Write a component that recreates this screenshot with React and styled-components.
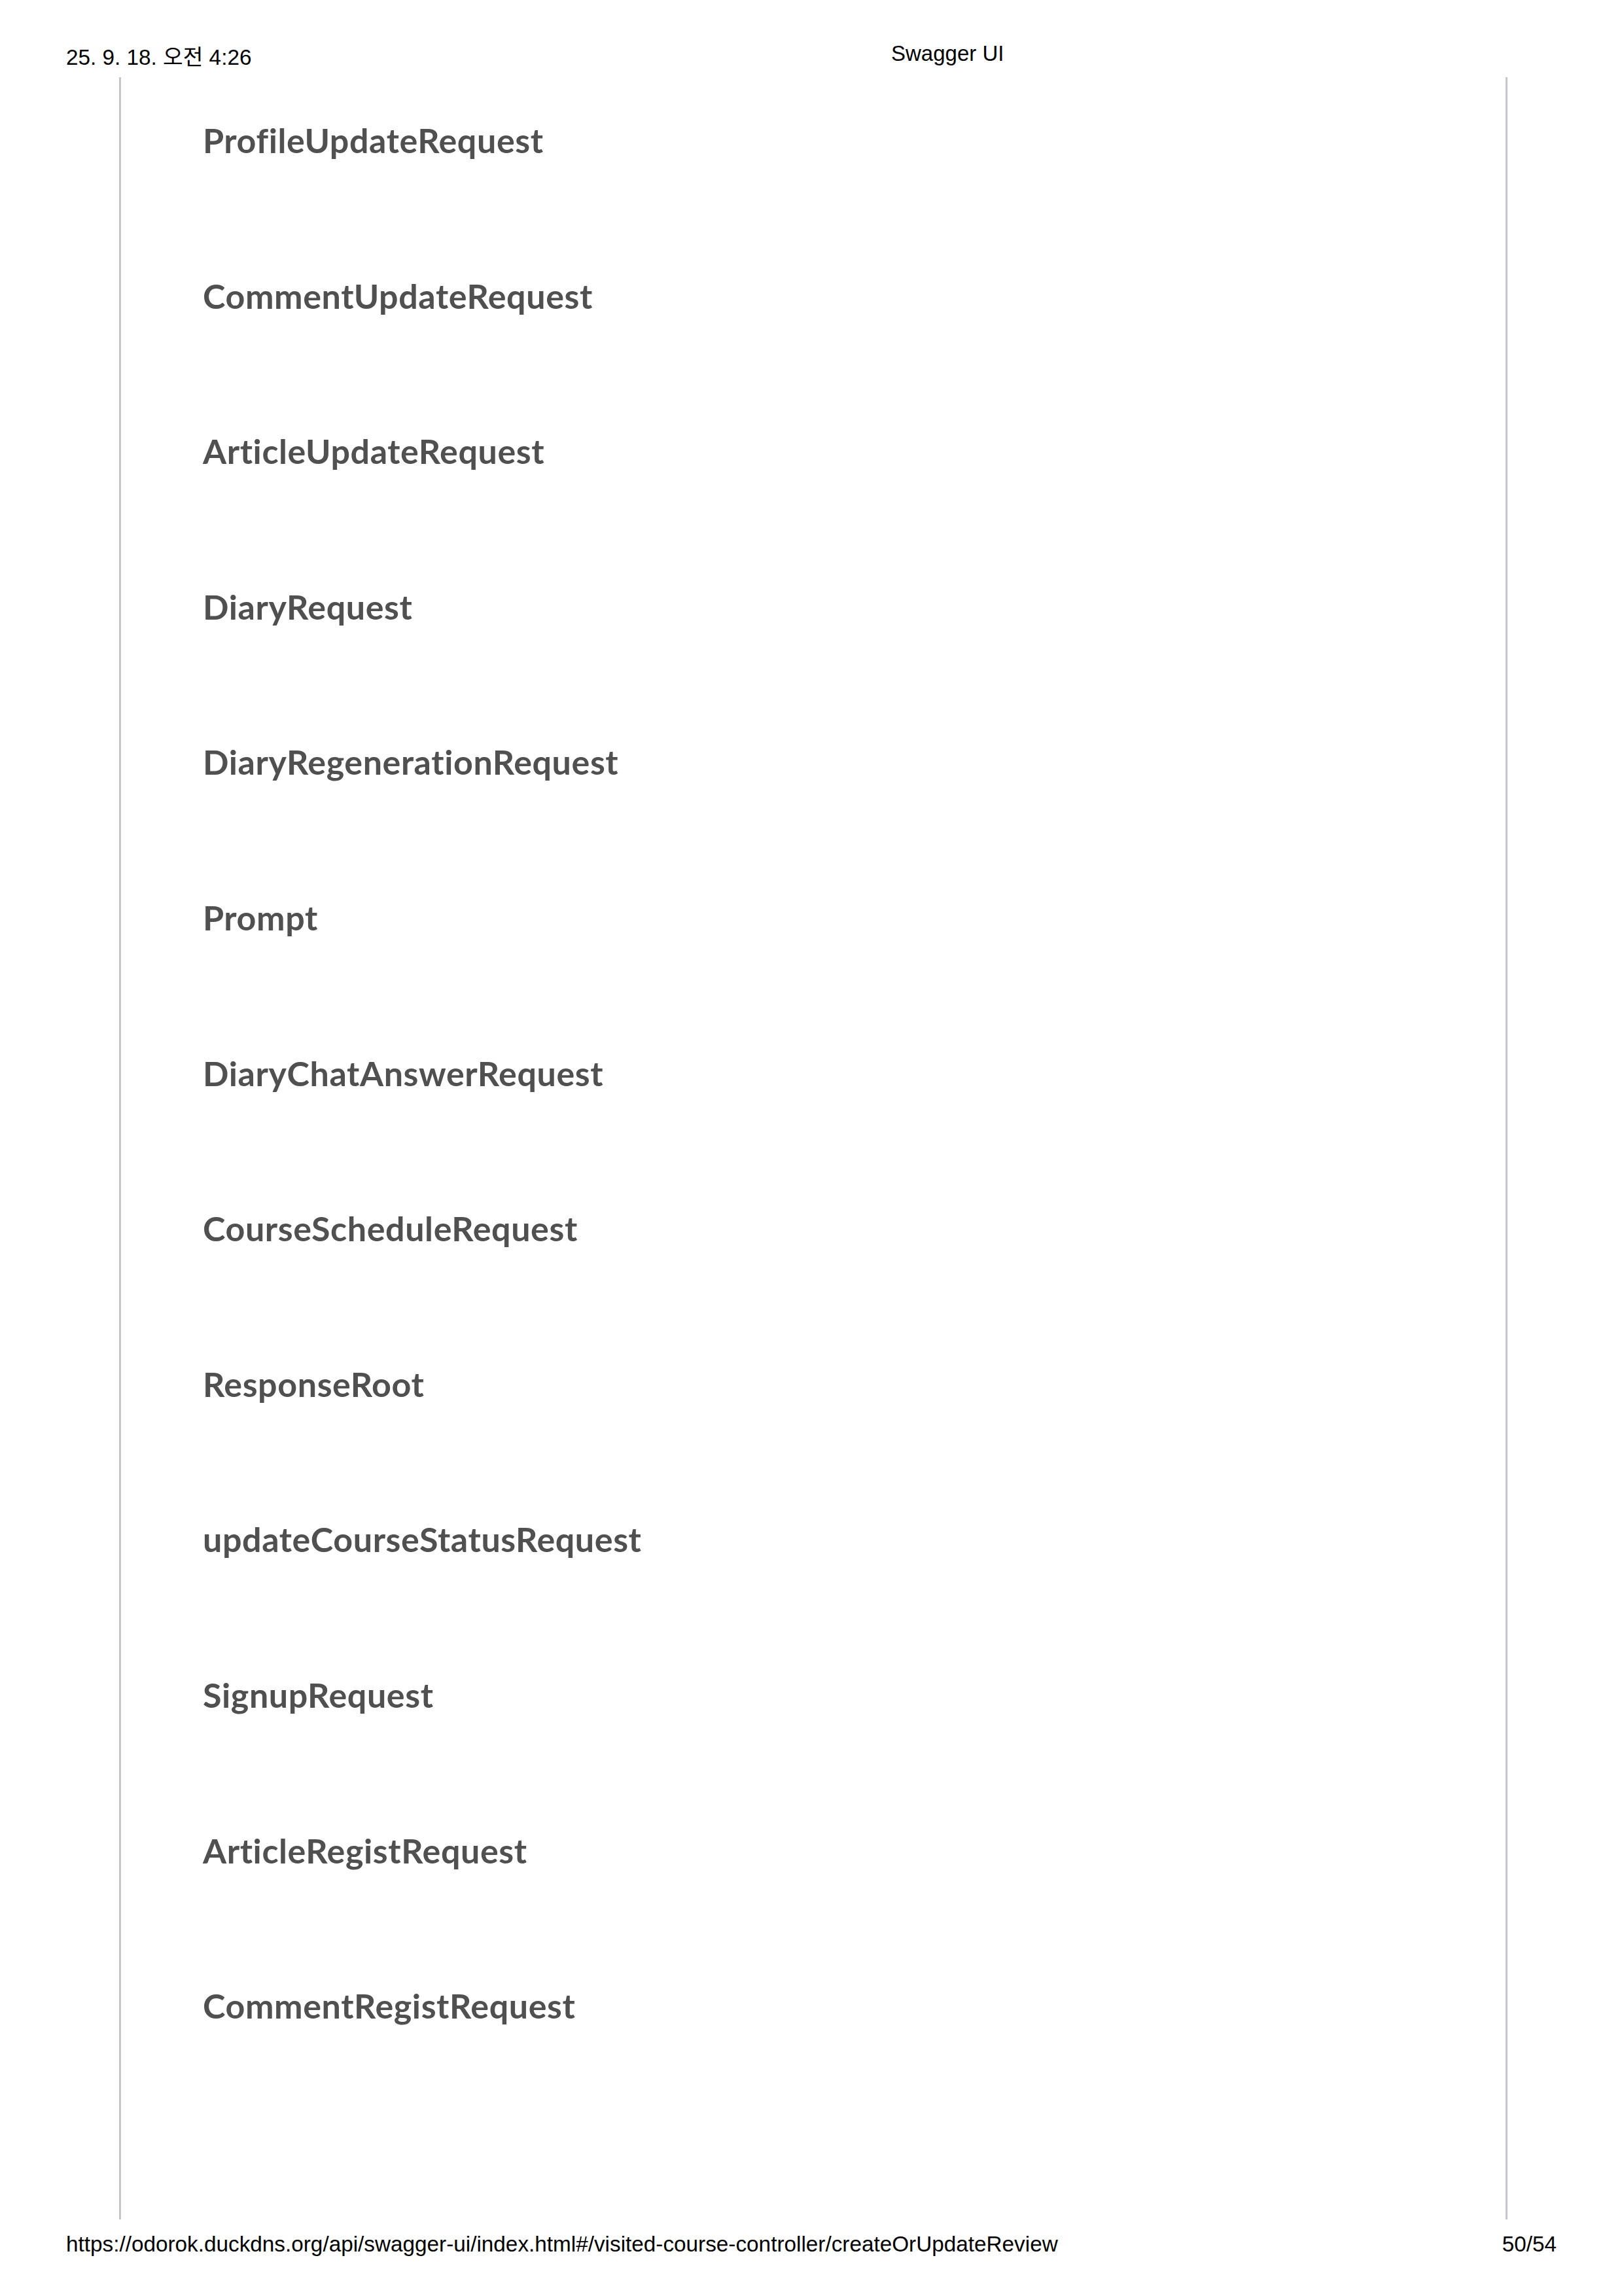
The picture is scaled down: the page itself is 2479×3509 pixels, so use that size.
import React from 'react';
import styled, { createGlobalStyle } from 'styled-components';

// Printed Swagger UI page: schema names only

const GlobalStyle = createGlobalStyle`
  html, body {
    margin: 0;
    padding: 0;
    background: #ffffff;
  }
  body {
    width: 2479px;
    height: 3509px;
    overflow: hidden;
  }
`;

const Page = styled.div`
  width: 2479px;
  height: 3509px;
  display: flex;
  flex-direction: column;
  font-family: "Liberation Sans", "Noto Sans CJK KR", sans-serif;
  color: #000000;
`;

const PrintHeader = styled.header`
  box-sizing: border-box;
  height: 118px;
  padding: 62px 0 0 101px;
  display: flex;
  align-items: flex-start;
`;

const HeaderDate = styled.div`
  flex: 0 0 1261px;
  padding-top: 6px;
  font-size: 33.3px;
  line-height: 40px;
`;

const HeaderTitle = styled.div`
  font-size: 33px;
  line-height: 40px;
`;

const Frame = styled.main`
  box-sizing: border-box;
  margin-left: 182px;
  width: 2122px;
  height: 3274px;
  border-left: 3px solid #c6c6ca;
  border-right: 3px solid #c6c6ca;
  padding: 66px 0 0 125px;
  display: flex;
  flex-direction: column;
  gap: 177.6px;
`;

const ModelTitle = styled.h4`
  margin: 0;
  font-family: Lato, "Noto Sans", sans-serif;
  font-weight: 700;
  font-size: 52px;
  letter-spacing: 0.6px;
  font-variant-ligatures: none;
  line-height: 60px;
  color: #505050;
`;

const PrintFooter = styled.footer`
  margin-top: 18px;
  padding: 0 100px 0 101px;
  display: flex;
  justify-content: space-between;
  font-size: 33.3px;
  line-height: 40px;
`;

const models = [
  'ProfileUpdateRequest',
  'CommentUpdateRequest',
  'ArticleUpdateRequest',
  'DiaryRequest',
  'DiaryRegenerationRequest',
  'Prompt',
  'DiaryChatAnswerRequest',
  'CourseScheduleRequest',
  'ResponseRoot',
  'updateCourseStatusRequest',
  'SignupRequest',
  'ArticleRegistRequest',
  'CommentRegistRequest',
];

const App = () => {
  return (
    <Page>
      <GlobalStyle />
      <PrintHeader>
        <HeaderDate>25. 9. 18. 오전 4:26</HeaderDate>
        <HeaderTitle>Swagger UI</HeaderTitle>
      </PrintHeader>
      <Frame>
        {models.map(name => (
          <ModelTitle key={name}>{name}</ModelTitle>
        ))}
      </Frame>
      <PrintFooter>
        <span>https://odorok.duckdns.org/api/swagger-ui/index.html#/visited-course-controller/createOrUpdateReview</span>
        <span>50/54</span>
      </PrintFooter>
    </Page>
  );
};

export default App;
